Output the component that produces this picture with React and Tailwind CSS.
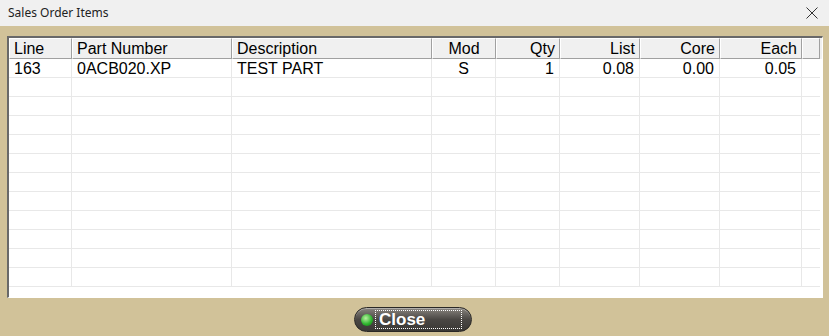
const columns = [
  { name: 'Line', w: 'w-[63px]', align: 'text-left' },
  { name: 'Part Number', w: 'w-[160px]', align: 'text-left' },
  { name: 'Description', w: 'w-[200px]', align: 'text-left' },
  { name: 'Mod', w: 'w-[64px]', align: 'text-center' },
  { name: 'Qty', w: 'w-[64px]', align: 'text-right' },
  { name: 'List', w: 'w-[80px]', align: 'text-right' },
  { name: 'Core', w: 'w-[80px]', align: 'text-right' },
  { name: 'Each', w: 'w-[82px]', align: 'text-right' },
];

const rows = [['163', '0ACB020.XP', 'TEST PART', 'S', '1', '0.08', '0.00', '0.05']];
const emptyRows = 11;

const App = () => {
  return (
    <div className="w-[829px] h-[336px] bg-[#d1c299] flex flex-col font-['Liberation_Sans',Arial,sans-serif] overflow-hidden">
      {/* Title bar */}
      <div className="h-[26px] bg-[#f0f0f0] flex items-center justify-between pl-[8px] pr-[11px] shrink-0">
        <span className="text-[12px] text-[#222] font-['Noto_Sans',sans-serif]">Sales Order Items</span>
        <svg width="12" height="12" viewBox="0 0 12 12" className="text-[#333]">
          <path d="M0.5 0.5 L11.5 11.5 M11.5 0.5 L0.5 11.5" stroke="currentColor" strokeWidth="1" />
        </svg>
      </div>

      {/* Grid */}
      <div className="mt-[10px] ml-[7px] w-[816px] h-[262px] bg-white border-l-2 border-t-2 border-[#696969] border-r border-b border-r-[#fff] border-b-[#fff] shrink-0 overflow-hidden">
        <div className="flex h-[21px] bg-[#f0f0f0]">
          {columns.map((c) => (
            <div
              key={c.name}
              className={`${c.w} ${c.align} shrink-0 px-[4px] text-[16px] leading-[19px] text-black border-t border-l border-white border-r border-b border-r-[#a0a0a0] border-b-[#a0a0a0]`}
            >
              {c.name}
            </div>
          ))}
          <div className="w-[18px] shrink-0 border-t border-l border-white border-r border-b border-r-[#a0a0a0] border-b-[#a0a0a0]" />
        </div>
        {rows.map((r, i) => (
          <div key={i} className="flex h-[19px]">
            {columns.map((c, j) => (
              <div
                key={c.name}
                className={`${c.w} ${c.align} shrink-0 px-[5px] text-[16px] leading-[19px] text-black border-r border-b border-[#e8e8e8]`}
              >
                {r[j]}
              </div>
            ))}
            <div className="w-[18px] shrink-0 border-b border-[#e8e8e8]" />
          </div>
        ))}
        {Array.from({ length: emptyRows }).map((_, i) => (
          <div key={i} className="flex h-[19px]">
            {columns.map((c) => (
              <div key={c.name} className={`${c.w} shrink-0 border-r border-b border-[#e8e8e8]`} />
            ))}
            <div className="w-[18px] shrink-0 border-b border-[#e8e8e8]" />
          </div>
        ))}
      </div>

      {/* Close button */}
      <div className="flex justify-center mt-[9px] pr-[3px]">
        <button className="w-[118px] h-[25px] rounded-full bg-gradient-to-b from-[#8a8680] via-[#4a4744] to-[#3a3835] border border-[#2a2826] shadow-[inset_0_1px_0_rgba(255,255,255,0.35)] flex items-center pl-[6px]">
          <span className="w-[12px] h-[12px] rounded-full bg-[radial-gradient(circle_at_40%_35%,#b8f0a0,#2fb52f_55%,#0d6a12)] shrink-0" />
          <span className="ml-[2px] h-[19px] w-[87px] border border-dotted border-white flex items-center pl-[3px] text-white font-bold text-[17px] leading-none">
            Close
          </span>
        </button>
      </div>
    </div>
  );
};

export default App;
